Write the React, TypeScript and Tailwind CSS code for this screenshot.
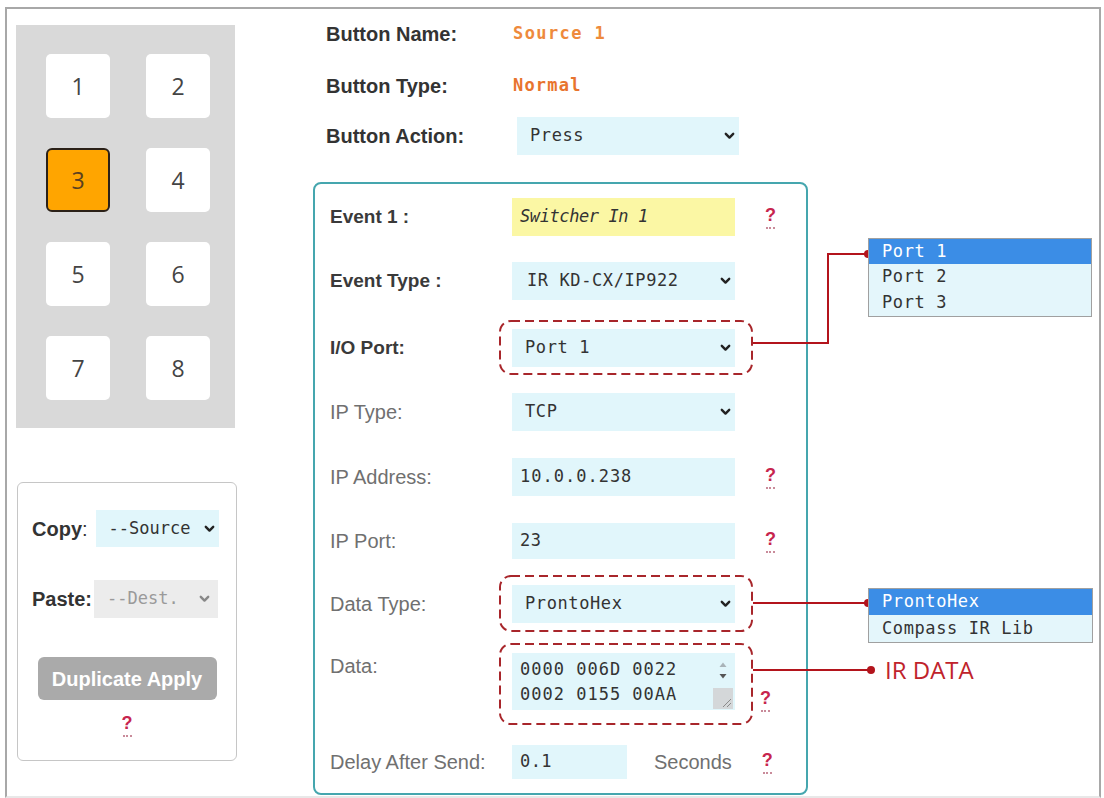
import React from "react";

const MONO = "font-['DejaVu_Sans_Mono',monospace]";

function Chevron({ color = "#222" }: { color?: string }) {
  return (
    <svg width="11" height="8" viewBox="0 0 11 8" className="shrink-0">
      <path
        d="M1.8 1.8 L5.5 5.6 L9.2 1.8"
        fill="none"
        stroke={color}
        strokeWidth="2.4"
        strokeLinecap="round"
        strokeLinejoin="round"
      />
    </svg>
  );
}

function SelectBox({
  value,
  className = "",
  textClass = "",
  chevron = "#222",
}: {
  value: string;
  className?: string;
  textClass?: string;
  chevron?: string;
}) {
  return (
    <div className={`flex items-center justify-between pl-[13px] pr-[4px] ${className}`}>
      <span className={`${MONO} text-[17px] tracking-[0.6px] ${textClass}`}>{value}</span>
      <Chevron color={chevron} />
    </div>
  );
}

function Help({ className = "" }: { className?: string }) {
  return (
    <span className={`inline-flex flex-col items-center ${className}`}>
      <span className="font-bold text-[18px] leading-none text-[#c7254e]">?</span>
      <span className="mt-[3px] w-[9px] border-t-2 border-dotted border-[#c98b9a]"></span>
    </span>
  );
}

function DashFrame({ w, h, className = "" }: { w: number; h: number; className?: string }) {
  return (
    <svg width={w} height={h} className={`absolute pointer-events-none ${className}`}>
      <rect
        x="1"
        y="1"
        width={w - 2}
        height={h - 2}
        rx="11"
        fill="none"
        stroke="#a8262b"
        strokeWidth="2"
        strokeDasharray="9 5"
      />
    </svg>
  );
}

const boldLabel = "w-[182px] shrink-0 font-bold text-[19px] text-[#3a3a3a]";
const lightLabel = "w-[182px] shrink-0 text-[20px] text-[#707070]";
const fieldBg = "bg-[#e1f6fb]";

function KeyButton({ n, active = false }: { n: number; active?: boolean }) {
  return (
    <div
      className={
        active
          ? "w-[64px] h-[64px] rounded-[6px] bg-[#ffa500] border-2 border-[#2b2118] flex items-center justify-center text-[23px] text-[#5a4020] font-['Open_Sans',sans-serif]"
          : "w-[64px] h-[64px] rounded-[5px] bg-white flex items-center justify-center text-[23px] text-[#444] font-['Open_Sans',sans-serif]"
      }
    >
      {n}
    </div>
  );
}

export default function App() {
  return (
    <div className="relative w-[1104px] h-[798px] overflow-hidden bg-white font-['Liberation_Sans',Arial,sans-serif] text-[#333]">
      <div className="pt-[7px] pl-[5px]">
        <div className="flex w-[1096px] h-[791px] border-2 border-[#a8a8a8] border-b-[#e8e8e8]">
          {/* left column: key pad and copy/paste tools */}
          <div className="w-[306px] shrink-0 flex flex-col">
            <div className="ml-[9px] mt-[16px] w-[219px] h-[403px] bg-[#d9d9d9] pl-[30px] pt-[29px]">
              <div className="grid grid-cols-[64px_64px] gap-x-[36px] gap-y-[30px]">
                <KeyButton n={1} />
                <KeyButton n={2} />
                <KeyButton n={3} active />
                <KeyButton n={4} />
                <KeyButton n={5} />
                <KeyButton n={6} />
                <KeyButton n={7} />
                <KeyButton n={8} />
              </div>
            </div>

            <div className="ml-[10px] mt-[54px] w-[220px] h-[279px] border border-[#c6c6c6] rounded-[6px] flex flex-col">
              <div className="mt-[27px] pl-[14px] flex items-center h-[37px]">
                <span className="text-[20px] text-[#333]">
                  <span className="font-bold">Copy</span>:
                </span>
                <SelectBox
                  value="--Source"
                  className={`ml-[8px] w-[123px] h-[37px] ${fieldBg} pl-[10px]`}
                  textClass="text-[#333] tracking-[0px]"
                />
              </div>
              <div className="mt-[33px] pl-[14px] flex items-center h-[38px]">
                <span className="text-[20px] font-bold text-[#333]">Paste:</span>
                <SelectBox
                  value="--Dest."
                  className="ml-[2px] w-[124px] h-[38px] bg-[#ececec] pl-[12px] pr-[8px]"
                  textClass="text-[#9a9a9a] tracking-[0px]"
                  chevron="#888"
                />
              </div>
              <div className="mt-[39px] mx-auto w-[179px] h-[43px] rounded-[6px] bg-[#aaaaaa] flex items-center justify-center text-white font-bold text-[20px]">
                Duplicate Apply
              </div>
              <div className="mt-[14px] flex justify-center">
                <Help />
              </div>
            </div>
          </div>

          {/* right column: button properties and event settings */}
          <div className="flex flex-col">
            <div className="pl-[13px] pt-[6px]">
              <div className="flex items-center h-[38px]">
                <span className="w-[187px] font-bold text-[20px] text-[#333]">Button Name:</span>
                <span className={`${MONO} font-bold text-[17px] tracking-[1.4px] text-[#ee8a3c]`}>Source 1</span>
              </div>
              <div className="flex items-center h-[38px] mt-[14px]">
                <span className="w-[187px] font-bold text-[20px] text-[#333]">Button Type:</span>
                <span className={`${MONO} font-bold text-[17px] tracking-[1.2px] text-[#e8742e]`}>Normal</span>
              </div>
              <div className="flex items-center h-[38px] mt-[12px]">
                <span className="w-[191px] font-bold text-[20px] text-[#333]">Button Action:</span>
                <SelectBox value="Press" className={`w-[222px] h-[38px] ${fieldBg} pl-[12px]`} textClass="text-[#333]" />
              </div>
            </div>

            <div className="mt-[27px] w-[495px] h-[613px] border-2 border-[#45a6ae] rounded-[8px] pl-[15px] pt-[14px] flex flex-col">
              {/* Event 1 */}
              <div className="flex items-center h-[38px]">
                <span className={boldLabel}>Event 1 :</span>
                <div className="w-[223px] h-[38px] bg-[#fbf7a4] flex items-center pl-[8px]">
                  <span className={`${MONO} italic text-[17px] tracking-[-0.4px] text-[#333]`}>Switcher In 1</span>
                </div>
                <Help className="ml-[30px]" />
              </div>

              {/* Event Type */}
              <div className="flex items-center h-[38px] mt-[26px]">
                <span className={boldLabel}>Event Type :</span>
                <SelectBox value="IR KD-CX/IP922" className={`w-[223px] h-[38px] ${fieldBg} pl-[15px]`} textClass="text-[#333]" />
              </div>

              {/* I/O Port */}
              <div className="flex items-center h-[38px] mt-[29px]">
                <span className={boldLabel}>I/O Port:</span>
                <div className="relative">
                  <SelectBox value="Port 1" className={`w-[223px] h-[38px] ${fieldBg}`} textClass="text-[#333]" />
                  <DashFrame w={254} h={55} className="-left-[13px] -top-[9px]" />
                </div>
              </div>

              {/* IP Type */}
              <div className="flex items-center h-[38px] mt-[26px]">
                <span className={lightLabel}>IP Type:</span>
                <SelectBox value="TCP" className={`w-[223px] h-[38px] ${fieldBg}`} textClass="text-[#333]" />
              </div>

              {/* IP Address */}
              <div className="flex items-center h-[38px] mt-[27px]">
                <span className={lightLabel}>IP Address:</span>
                <div className={`w-[223px] h-[38px] ${fieldBg} flex items-center pl-[8px]`}>
                  <span className={`${MONO} text-[17px] tracking-[1px] text-[#333]`}>10.0.0.238</span>
                </div>
                <Help className="ml-[30px]" />
              </div>

              {/* IP Port */}
              <div className="flex items-center h-[38px] mt-[26px]">
                <span className={lightLabel}>IP Port:</span>
                <div className={`w-[223px] h-[36px] ${fieldBg} flex items-center pl-[8px]`}>
                  <span className={`${MONO} text-[17px] tracking-[0.6px] text-[#333]`}>23</span>
                </div>
                <Help className="ml-[30px]" />
              </div>

              {/* Data Type */}
              <div className="flex items-center h-[38px] mt-[25px]">
                <span className={lightLabel}>Data Type:</span>
                <div className="relative">
                  <SelectBox value="ProntoHex" className={`w-[223px] h-[38px] ${fieldBg}`} textClass="text-[#333]" />
                  <DashFrame w={254} h={57} className="-left-[13px] -top-[10px]" />
                </div>
              </div>

              {/* Data */}
              <div className="flex items-start mt-[30px]">
                <span className={`${lightLabel} -mt-[2px]`}>Data:</span>
                <div className="relative">
                  <div className={`w-[223px] h-[57px] ${fieldBg} flex`}>
                    <div className={`flex-1 pl-[8px] pt-[4px] ${MONO} text-[17px] tracking-[1px] leading-[25px] text-[#333]`}>
                      <div>0000 006D 0022</div>
                      <div>0002 0155 00AA</div>
                    </div>
                    {/* scrollbar with resize grip */}
                    <div className="w-[20px] mr-[2px] flex flex-col items-center">
                      <svg width="12" height="28" viewBox="0 0 12 28" className="mt-[4px]">
                        <path d="M2.5 10 L6 5.5 L9.5 10 Z" fill="#a9b3b8" />
                        <path d="M2.5 17 L6 21.5 L9.5 17 Z" fill="#555" />
                      </svg>
                      <div className="mt-[3px] w-[20px] h-[21px] bg-[#d4d7d9] relative">
                        <svg width="20" height="21" viewBox="0 0 20 21" className="absolute left-0 top-0">
                          <path d="M10 19 L18 11 M14 19 L18 15" stroke="#8a8a8a" strokeWidth="1" />
                        </svg>
                      </div>
                    </div>
                  </div>
                  <DashFrame w={254} h={82} className="-left-[13px] -top-[10px]" />
                </div>
                <Help className="ml-[25px] self-end -mb-[2px]" />
              </div>

              {/* Delay After Send */}
              <div className="flex items-center h-[34px] mt-[35px]">
                <span className={lightLabel}>Delay After Send:</span>
                <div className={`w-[115px] h-[34px] ${fieldBg} flex items-center pl-[8px]`}>
                  <span className={`${MONO} text-[17px] tracking-[0.4px] text-[#333]`}>0.1</span>
                </div>
                <span className="ml-[27px] text-[20px] text-[#707070]">Seconds</span>
                <Help className="ml-[30px]" />
              </div>
            </div>
          </div>
        </div>
      </div>

      {/* callout connectors */}
      <svg width="1104" height="798" className="absolute left-0 top-0 pointer-events-none">
        <polyline points="753,343 828,343 828,254 866,254" fill="none" stroke="#b3141c" strokeWidth="2" />
        <circle cx="868" cy="254" r="4" fill="#b3141c" />
        <line x1="753" y1="603" x2="866" y2="603" stroke="#b3141c" strokeWidth="2" />
        <circle cx="868" cy="603" r="4" fill="#b3141c" />
        <line x1="753" y1="670" x2="869" y2="670" stroke="#b3141c" strokeWidth="2" />
        <circle cx="871" cy="670" r="4" fill="#b3141c" />
      </svg>

      {/* port option list */}
      <div className={`absolute left-[868px] top-[238px] w-[224px] border border-[#a0a0a0] bg-[#e4f6fb] ${MONO} text-[17px] tracking-[0.6px]`}>
        <div className="h-[25px] bg-[#3b8de6] text-white pl-[13px] flex items-center">Port 1</div>
        <div className="h-[26px] text-[#333] pl-[13px] flex items-center">Port 2</div>
        <div className="h-[26px] text-[#333] pl-[13px] flex items-center">Port 3</div>
      </div>

      {/* data type option list */}
      <div className={`absolute left-[868px] top-[588px] w-[225px] border border-[#a0a0a0] bg-[#e4f6fb] ${MONO} text-[17px] tracking-[0.6px]`}>
        <div className="h-[26px] bg-[#3b8de6] text-white pl-[13px] flex items-center">ProntoHex</div>
        <div className="h-[27px] text-[#333] pl-[13px] flex items-center">Compass IR Lib</div>
      </div>

      <div className="absolute left-[885px] top-[655px] h-[30px] flex items-center text-[24px] leading-none text-[#c0232b] font-['Open_Sans',sans-serif]">
        IR DATA
      </div>
    </div>
  );
}
